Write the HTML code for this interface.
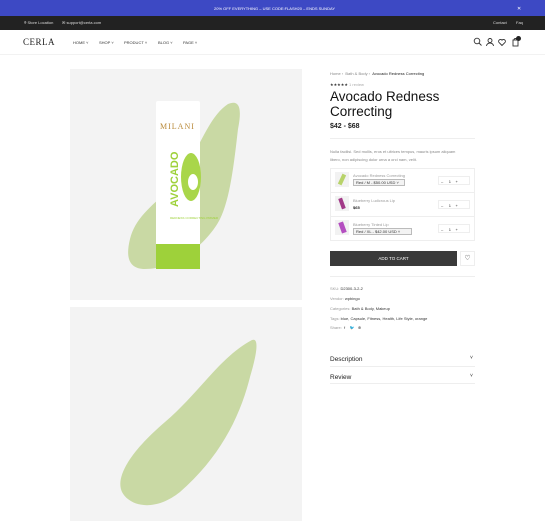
<!DOCTYPE html>
<html><head><meta charset="utf-8"><style>
*{margin:0;padding:0;box-sizing:border-box}
body{width:545px;height:521px;overflow:hidden;background:#fff;font-family:"Liberation Sans",sans-serif;color:#222;position:relative}
.a{position:absolute}
.t{font-size:4px;color:#555;white-space:nowrap}
</style></head><body>
<div class="a" style="left:0;top:0;width:545px;height:16px;background:#3d49c4"></div>
<div class="a t" style="left:214px;top:6px;color:#fff;font-size:4px">20% OFF EVERYTHING – USE CODE:FLASH20 – ENDS SUNDAY</div>
<div class="a" style="left:517px;top:6px;color:#fff;font-size:5px">✕</div>
<div class="a" style="left:0;top:16px;width:545px;height:14px;background:#222"></div>
<div class="a t" style="left:24px;top:20px;color:#ddd">⌾ Store Location</div>
<div class="a t" style="left:62px;top:20px;color:#ddd">✉ support@cerla.com</div>
<div class="a t" style="left:493px;top:20px;color:#ddd">Contact</div>
<div class="a t" style="left:516px;top:20px;color:#ddd">Faq</div>
<div class="a" style="left:23px;top:37px;font-size:9px;font-family:'Liberation Serif',serif;letter-spacing:0.5px">CERLA</div>
<div class="a t" style="left:73px;top:40px;color:#333">HOME ˅</div>
<div class="a t" style="left:99px;top:40px;color:#333">SHOP ˅</div>
<div class="a t" style="left:124px;top:40px;color:#333">PRODUCT ˅</div>
<div class="a t" style="left:158px;top:40px;color:#333">BLOG ˅</div>
<div class="a t" style="left:183px;top:40px;color:#333">PAGE ˅</div>
<svg class="a" style="left:473px;top:37px" width="50" height="10" fill="none" stroke="#333" stroke-width="0.9">
<circle cx="4" cy="4" r="2.8"/><path d="M6 6l2.5 2.5"/>
<circle cx="17" cy="3.5" r="2"/><path d="M13.5 9a3.5 3 0 0 1 7 0"/>
<path d="M29 8.5l-3-3a1.8 1.8 0 0 1 3-2.3a1.8 1.8 0 0 1 3 2.3z"/>
<rect x="40" y="3" width="5" height="6"/><path d="M41 3a1.5 1.5 0 0 1 3 0"/>
</svg>
<div class="a" style="left:516px;top:36px;width:5px;height:5px;border-radius:50%;background:#222"></div>
<div class="a" style="left:0;top:54px;width:545px;height:1px;background:#f2f2f2"></div>

<div class="a" style="left:70px;top:69px;width:232px;height:231px;background:#f3f3f3"></div>
<svg class="a" style="left:70px;top:69px" width="232" height="231">
<path d="M158 35C170 30 172 40 168 60C164 95 160 130 150 150C140 170 110 200 75 200C60 200 55 190 60 170C65 150 80 138 100 120C125 95 135 50 158 35Z" fill="#c9d9a4"/>
<rect x="86" y="32" width="44" height="168" rx="2" fill="#fff"/>
<rect x="86" y="175" width="44" height="25" fill="#9ed13a"/>
<text x="90" y="60" font-size="8" fill="#b98a3a" font-family="Liberation Serif" letter-spacing="1">MILANI</text>
<text transform="translate(108,138) rotate(-90)" font-size="11" font-weight="bold" fill="#9ed13a" font-family="Liberation Sans">AVOCADO</text>
<ellipse cx="121" cy="108" rx="10" ry="24" fill="#a9d64a"/>
<ellipse cx="123" cy="113" rx="5" ry="8" fill="#fff"/>
<text x="100" y="150" font-size="3" fill="#9ed13a">REDNESS CORRECTING PRIMER</text>
</svg>
<div class="a" style="left:70px;top:307px;width:232px;height:214px;background:#f3f3f3"></div>
<svg class="a" style="left:70px;top:307px" width="232" height="214">
<path d="M182 33C190 30 186 50 180 70C170 110 150 150 110 185C85 205 60 200 52 185C45 170 60 145 95 115C130 85 150 50 182 33Z" fill="#c9d9a4"/>
</svg>

<div class="a t" style="left:330px;top:71px;color:#888">Home › &nbsp;Bath & Body › &nbsp;<span style="color:#222">Avocado Redness Correcting</span></div>
<div class="a t" style="left:330px;top:82px;color:#aaa"><span style="color:#333">★★★★★</span> 1 review</div>
<div class="a" style="left:330px;top:89px;font-size:13.5px;line-height:15px;color:#111">Avocado Redness<br>Correcting</div>
<div class="a" style="left:330px;top:123px;font-size:7px;font-weight:bold">$42 - $68</div>
<div class="a" style="left:330px;top:138px;width:145px;height:1px;background:#eee"></div>
<div class="a t" style="left:330px;top:148px;color:#888;line-height:8px">Nulla facilisi. Sed mollis, eros et ultrices tempus, mauris ipsum aliquam<br>libero, non adipiscing dolor urna a orci nam, velit.</div>
<div class="a" style="left:330px;top:168px;width:145px;height:73px;border:1px solid #eee"></div>
<div class="a" style="left:331px;top:192px;width:143px;height:1px;background:#eee"></div>
<div class="a" style="left:331px;top:216px;width:143px;height:1px;background:#eee"></div>
<div class="a" style="left:335px;top:172px;width:14px;height:15px;background:#f2f2f2"></div>
<div class="a" style="left:335px;top:196px;width:14px;height:15px;background:#f2f2f2"></div>
<div class="a" style="left:335px;top:220px;width:14px;height:15px;background:#f2f2f2"></div>
<div class="a" style="left:340px;top:174px;width:4px;height:11px;background:#b8d36a;transform:rotate(25deg)"></div>
<div class="a" style="left:340px;top:198px;width:4px;height:11px;background:#a23a88;transform:rotate(-20deg)"></div>
<div class="a" style="left:340px;top:222px;width:5px;height:11px;background:#b44ec0;transform:rotate(-20deg)"></div>
<div class="a t" style="left:353px;top:173px;color:#999">Avocado Redness Correcting</div>
<div class="a t" style="left:353px;top:179px;border:1px solid #bbb;background:#f3f3f3;padding:0 2px;width:52px;color:#333">Red / M - $50.00 USD ˅</div>
<div class="a t" style="left:353px;top:198px;color:#999">Blueberry Ludicrous Lip</div>
<div class="a t" style="left:353px;top:205px;color:#222;font-weight:bold">$65</div>
<div class="a t" style="left:353px;top:222px;color:#999">Blueberry Tinted Lip</div>
<div class="a t" style="left:353px;top:228px;border:1px solid #bbb;background:#f3f3f3;padding:0 2px;width:59px;color:#333">Red / XL - $42.00 USD ˅</div>
<div class="a t" style="left:438px;top:176px;border:1px solid #eee;width:32px;height:9px;padding:2px 2px;color:#333">– &nbsp;&nbsp;&nbsp;&nbsp;1 &nbsp;&nbsp;&nbsp;+</div>
<div class="a t" style="left:438px;top:200px;border:1px solid #eee;width:32px;height:9px;padding:2px 2px;color:#333">– &nbsp;&nbsp;&nbsp;&nbsp;1 &nbsp;&nbsp;&nbsp;+</div>
<div class="a t" style="left:438px;top:224px;border:1px solid #eee;width:32px;height:9px;padding:2px 2px;color:#333">– &nbsp;&nbsp;&nbsp;&nbsp;1 &nbsp;&nbsp;&nbsp;+</div>
<div class="a" style="left:330px;top:251px;width:127px;height:15px;background:#3a3a3a;color:#fff;font-size:4.5px;text-align:center;line-height:15px">ADD TO CART</div>
<div class="a" style="left:460px;top:251px;width:15px;height:15px;border:1px solid #eee;font-size:7px;text-align:center;line-height:13px">♡</div>
<div class="a" style="left:330px;top:276px;width:145px;height:1px;background:#eee"></div>
<div class="a t" style="left:330px;top:286px;color:#999">SKU: <span style="color:#333">D2300-3-2-2</span></div>
<div class="a t" style="left:330px;top:296px;color:#999">Vendor: <span style="color:#333">wpbingo</span></div>
<div class="a t" style="left:330px;top:306px;color:#999">Categories: <span style="color:#333">Bath & Body, Makeup</span></div>
<div class="a t" style="left:330px;top:316px;color:#999">Tags: <span style="color:#333">blue, Capsule, Fitness, Health, Life Style, orange</span></div>
<div class="a t" style="left:330px;top:325px;color:#999">Share: &nbsp;<span style="color:#333">f &nbsp;&nbsp;&nbsp;🐦 &nbsp;&nbsp;⊕</span></div>
<div class="a" style="left:330px;top:356px;font-size:6.5px;color:#222">Description</div>
<div class="a" style="left:470px;top:355px;font-size:5px">˅</div>
<div class="a" style="left:330px;top:366px;width:145px;height:1px;background:#eee"></div>
<div class="a" style="left:330px;top:374px;font-size:6.5px;color:#222">Review</div>
<div class="a" style="left:470px;top:373px;font-size:5px">˅</div>
<div class="a" style="left:330px;top:383px;width:145px;height:1px;background:#eee"></div>
</body></html>
